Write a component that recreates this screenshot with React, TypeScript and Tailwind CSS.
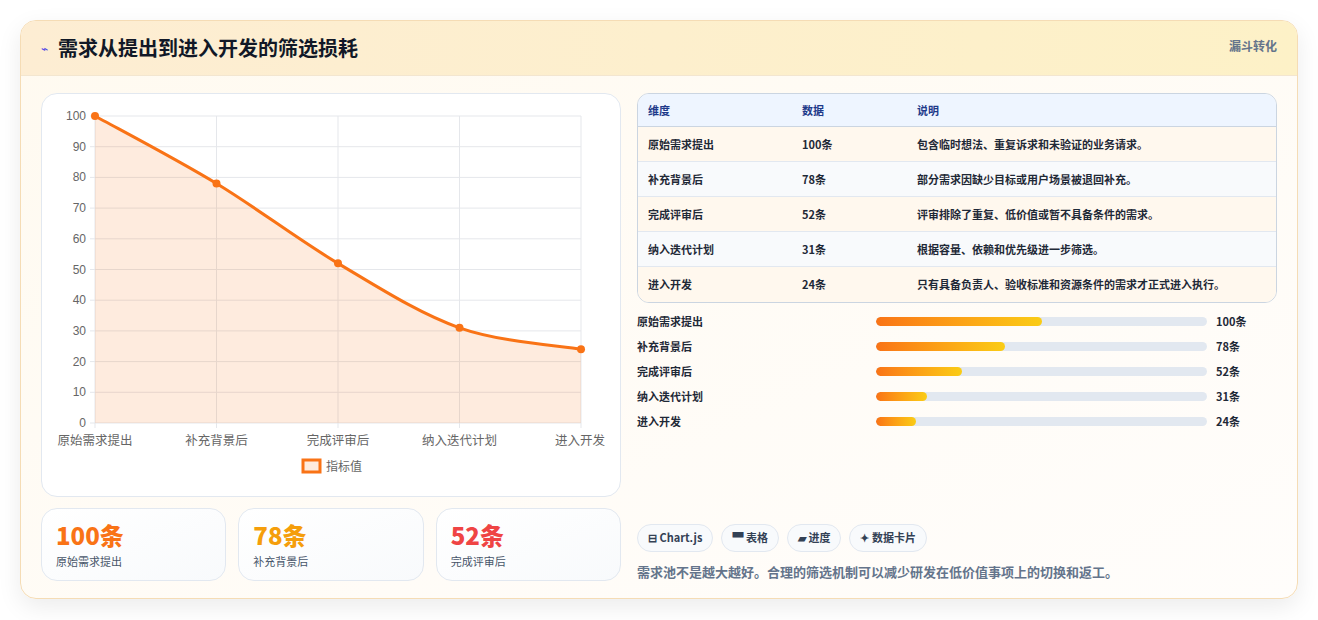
import React from "react";

const font = { fontFamily: '"Noto Sans CJK SC", "Noto Sans", sans-serif' };
const data = [
  { n: "原始需求提出", v: 100, d: "包含临时想法、重复诉求和未验证的业务请求。" },
  { n: "补充背景后", v: 78, d: "部分需求因缺少目标或用户场景被退回补充。" },
  { n: "完成评审后", v: 52, d: "评审排除了重复、低价值或暂不具备条件的需求。" },
  { n: "纳入迭代计划", v: 31, d: "根据容量、依赖和优先级进一步筛选。" },
  { n: "进入开发", v: 24, d: "只有具备负责人、验收标准和资源条件的需求才正式进入执行。" },
];

function Chart() {
  const x0 = 53, x1 = 539, y0 = 22, yb = 329;
  const pts = data.map((d, i) => [x0 + ((x1 - x0) / 4) * i, yb - (d.v / 100) * (yb - y0)]);
  let path = `M${pts[0][0]},${pts[0][1]}`;
  for (let i = 0; i < pts.length - 1; i++) {
    const p0 = pts[Math.max(0, i - 1)], p1 = pts[i], p2 = pts[i + 1], p3 = pts[Math.min(pts.length - 1, i + 2)];
    const t = 0.4 / 3 * 1.25;
    const c1 = [p1[0] + (p2[0] - p0[0]) * t, p1[1] + (p2[1] - p0[1]) * t];
    const c2 = [p2[0] - (p3[0] - p1[0]) * t, p2[1] - (p3[1] - p1[1]) * t];
    path += ` C${c1[0]},${c1[1]} ${c2[0]},${c2[1]} ${p2[0]},${p2[1]}`;
  }
  const area = `${path} L${x1},${yb} L${x0},${yb} Z`;
  return (
    <svg width="578" height="401" style={{ fontFamily: '"Liberation Sans", "Noto Sans CJK SC", sans-serif' }}>
      {Array.from({ length: 11 }).map((_, i) => {
        const y = yb - i * (yb - y0) / 10;
        return (
          <g key={i}>
            <line x1={x0 - 5} x2={x1} y1={y} y2={y} stroke="#e5e7eb" />
            <text x={x0 - 9} y={y + 4} fontSize="12" fill="#666" textAnchor="end">{i * 10}</text>
          </g>
        );
      })}
      {pts.map((p, i) => (
        <g key={i}>
          <line x1={p[0]} x2={p[0]} y1={y0} y2={yb + 5} stroke="#e5e7eb" />
          <text x={i === 4 ? p[0] - 1 : p[0]} y={yb + 22} fontSize="12.5" fill="#666" textAnchor="middle">{data[i].n}</text>
        </g>
      ))}
      <path d={area} fill="rgba(249,115,22,0.14)" />
      <path d={path} fill="none" stroke="#f97316" strokeWidth="3" />
      {pts.map((p, i) => <circle key={i} cx={p[0]} cy={p[1]} r="4" fill="#f97316" />)}
      <rect x="261" y="366" width="17" height="12" fill="rgba(249,115,22,0.14)" stroke="#f97316" strokeWidth="3" />
      <text x="284" y="377" fontSize="12" fill="#666">指标值</text>
    </svg>
  );
}

export default function App() {
  return (
    <div className="min-h-[620px] bg-white p-5" style={font}>
      <div className="rounded-2xl border border-[#f5dcb5] bg-gradient-to-br from-[#fffaf0] to-[#fffdfb] shadow-[0_8px_24px_rgba(0,0,0,0.08)] overflow-hidden">
        <div className="h-[55px] flex items-center justify-between px-5 bg-gradient-to-r from-[#fdedd3] to-[#fdf1c7] border-b border-[#f3e6d0]">
          <div className="flex items-center gap-2.5">
            <span className="text-[12px] text-[#4f46e5]">⌁</span>
            <span className="text-[20px] font-bold text-[#111827]">需求从提出到进入开发的筛选损耗</span>
          </div>
          <span className="text-[12px] font-bold text-[#64748b] self-start mt-[16px]">漏斗转化</span>
        </div>
        <div className="flex gap-4 px-5 pt-[17px] pb-[17px]">
          <div className="w-[580px] flex flex-col gap-[11px]">
            <div className="rounded-2xl border border-[#e2e8f0] bg-white h-[404px] overflow-hidden"><Chart /></div>
            <div className="grid grid-cols-3 gap-3">
              {[["100条", "#f97316", "原始需求提出"], ["78条", "#f59e0b", "补充背景后"], ["52条", "#ef4444", "完成评审后"]].map(([v, c, l]) => (
                <div key={l} className="h-[73px] rounded-2xl border border-[#e2e8f0] bg-gradient-to-br from-white to-[#f8fafc] px-3.5 pt-[10px]">
                  <div className="text-[24px] font-extrabold leading-[32px]" style={{ color: c }}>{v}</div>
                  <div className="text-[11px] text-[#475569] mt-[2px]">{l}</div>
                </div>
              ))}
            </div>
          </div>
          <div className="flex-1 flex flex-col">
            <div className="rounded-xl border border-[#cbd5e1] overflow-hidden text-[11px] font-semibold text-[#1f2937]">
              <div className="flex h-[33px] items-center bg-[#eef5ff] border-b border-[#cbd5e1] font-bold text-[#1e3a8a]">
                <div className="w-[164px] pl-[10px]">维度</div><div className="w-[115px]">数据</div><div>说明</div>
              </div>
              {data.map((d, i) => (
                <div key={i} className={`flex h-[35px] items-center ${i < 4 ? "border-b border-[#e2e8f0]" : ""} ${i % 2 ? "bg-[#f8fafc]" : "bg-[#fff8ee]"}`}>
                  <div className="w-[164px] pl-[10px]">{d.n}</div><div className="w-[115px]">{d.v}条</div><div>{d.d}</div>
                </div>
              ))}
            </div>
            <div className="flex flex-col mt-[6px]">
              {data.map((d, i) => (
                <div key={i} className="flex items-center h-[25px] text-[11px] font-bold text-[#1f2937]">
                  <div className="w-[239px]">{d.n}</div>
                  <div className="w-[331px] h-[9px] rounded-full bg-[#e2e8f0] overflow-hidden">
                    <div className="h-full rounded-full bg-gradient-to-r from-[#f97316] to-[#facc15]" style={{ width: `${d.v / 2}%` }} />
                  </div>
                  <div className="ml-[9px]">{d.v}条</div>
                </div>
              ))}
            </div>
            <div className="flex-1" />
            <div className="flex gap-2 text-[11px] font-bold text-[#334155]">
              {["⊟ Chart.js", "▀ 表格", "▰ 进度", "✦ 数据卡片"].map(t => (
                <div key={t} className="h-[28px] px-[10px] flex items-center rounded-full border border-[#e2e8f0] bg-[#f8fafc]">{t}</div>
              ))}
            </div>
            <div className="text-[13px] font-bold text-[#64748b] mt-[10px]">需求池不是越大越好。合理的筛选机制可以减少研发在低价值事项上的切换和返工。</div>
          </div>
        </div>
      </div>
    </div>
  );
}
